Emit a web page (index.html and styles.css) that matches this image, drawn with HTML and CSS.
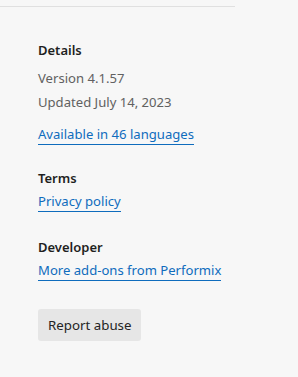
FILE: index.html
```html
<!DOCTYPE html>
<html>
<head>
<meta charset="utf-8">
<link rel="stylesheet" href="styles.css">
</head>
<body>
<div class="rule"></div>
<main class="content">
  <section class="section details">
    <h3 class="heading">Details</h3>
    <div class="meta">
      <span class="meta-line">Version 4.1.57</span>
      <span class="meta-line">Updated July 14, 2023</span>
    </div>
    <a class="link lang" href="#">Available in 46 languages</a>
  </section>
  <section class="section terms">
    <h3 class="heading">Terms</h3>
    <a class="link" href="#">Privacy policy</a>
  </section>
  <section class="section">
    <h3 class="heading">Developer</h3>
    <a class="link" href="#">More add-ons from Performix</a>
  </section>
  <button class="btn">Report abuse</button>
</main>
</body>
</html>
```
FILE: styles.css
```css
html, body {
  margin: 0;
  padding: 0;
  background: #f7f7f7;
  font-family: "Noto Sans", "Open Sans", sans-serif;
  font-size: 13.1px;
  color: #242424;
}
.rule {
  width: 235px;
  height: 1px;
  margin-top: 6px;
  background: #e0e0e0;
}
.content {
  padding-left: 38px;
  padding-top: 33px;
  display: flex;
  flex-direction: column;
  align-items: flex-start;
}
.section {
  display: flex;
  flex-direction: column;
  align-items: flex-start;
  margin-bottom: 24px;
}
.details {
  margin-bottom: 23px;
}
.terms {
  margin-bottom: 25px;
}
.heading {
  margin: 0 0 4px 0;
  font-size: 13px;
  line-height: 20px;
  font-weight: 600;
  color: #1f1f1f;
}
.meta {
  display: flex;
  flex-direction: column;
  margin-top: 2px;
  margin-bottom: 11px;
}
.meta-line {
  line-height: 24px;
  color: #616161;
}
.link {
  display: inline-block;
  line-height: 19px;
  color: #0f6cbd;
  text-decoration: none;
  border-bottom: 1px solid #0f6cbd;
}
.btn {
  margin-top: 4px;
  height: 32px;
  padding: 0 10px;
  border: none;
  border-radius: 3px;
  background: #e6e6e6;
  font-family: inherit;
  font-size: 13.3px;
  color: #242424;
}
```
